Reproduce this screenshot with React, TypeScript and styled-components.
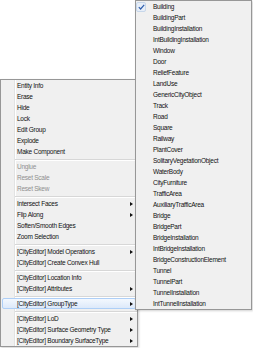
import React from 'react';
import styled, { createGlobalStyle, css } from 'styled-components';

const Global = createGlobalStyle`
  html, body { margin: 0; padding: 0; background: #ffffff; }
  body {
    width: 253px;
    height: 348px;
    overflow: hidden;
    font-family: "Liberation Sans", Arial, sans-serif;
  }
`;

const Stage = styled.div`
  position: relative;
  width: 253px;
  height: 348px;
  background: #ffffff;
  overflow: hidden;
`;

const MenuBase = styled.div`
  position: absolute;
  box-sizing: border-box;
  border: 1px solid #979797;
  display: flex;
  flex-direction: column;
  box-shadow: 1px 1px 2px rgba(0, 0, 0, 0.18);
`;

const ContextMenu = styled(MenuBase)`
  left: 0;
  top: 79px;
  width: 138px;
  padding: 0;
  background:
    linear-gradient(to right, transparent 13px, #e2e3e3 13px, #e2e3e3 14px, #ffffff 14px, #ffffff 15px, transparent 15px),
    #f0f0f0;
`;

const SubMenu = styled(MenuBase)`
  left: 135px;
  top: 0;
  width: 117px;
  padding: 0;
  background: #f0f0f0;
`;

const Row = styled.div<{ $disabled?: boolean; $active?: boolean; $gutter: number }>`
  height: 11px;
  flex: none;
  box-sizing: border-box;
  display: flex;
  align-items: center;
  margin: 0 1px;
  padding-left: ${(p) => p.$gutter}px;
  padding-right: 3px;
  font-size: 6.5px;
  letter-spacing: -0.25px;
  line-height: 11px;
  white-space: nowrap;
  color: ${(p) => (p.$disabled ? '#8f8f8f' : '#111111')};
  ${(p) =>
    p.$active &&
    css`
      border: 1px solid #aecff7;
      border-radius: 2px;
      background: linear-gradient(#f3f8fe, #dde9fa);
      padding-left: ${p.$gutter - 1}px;
      padding-right: 2px;
    `}
`;

const Label = styled.span`
  flex: 1;
`;

const Arrow = styled.span`
  width: 0;
  height: 0;
  border-left: 3px solid #111111;
  border-top: 2.5px solid transparent;
  border-bottom: 2.5px solid transparent;
`;

const Separator = styled.div`
  height: 4px;
  flex: none;
  display: flex;
  align-items: center;
  padding-left: 14px;
  &::after {
    content: '';
    flex: 1;
    height: 1px;
    background: #d7d7d7;
    box-shadow: 0 1px 0 #ffffff;
  }
`;

const CheckRow = styled.div`
  height: 11px;
  flex: none;
  display: flex;
  align-items: center;
  margin: 0 1px 0 0;
  font-size: 6.5px;
  letter-spacing: -0.25px;
  white-space: nowrap;
  color: #111111;
`;

const CheckBox = styled.span`
  width: 10px;
  height: 10px;
  box-sizing: border-box;
  margin-right: 7px;
  border: 1px solid #c7d7ea;
  border-radius: 2px;
  background: #e7eef8;
  display: flex;
  align-items: center;
  justify-content: center;
`;

type Item = { label: string; sub?: boolean; disabled?: boolean; active?: boolean } | 'sep';

const mainItems: Item[] = [
  { label: 'Entity Info' },
  { label: 'Erase' },
  { label: 'Hide' },
  { label: 'Lock' },
  { label: 'Edit Group' },
  { label: 'Explode' },
  { label: 'Make Component' },
  'sep',
  { label: 'Unglue', disabled: true },
  { label: 'Reset Scale', disabled: true },
  { label: 'Reset Skew', disabled: true },
  'sep',
  { label: 'Intersect Faces', sub: true },
  { label: 'Flip Along', sub: true },
  { label: 'Soften/Smooth Edges' },
  { label: 'Zoom Selection' },
  'sep',
  { label: '[CityEditor] Model Operations', sub: true },
  { label: '[CityEditor] Create Convex Hull' },
  'sep',
  { label: '[CityEditor] Location Info' },
  { label: '[CityEditor] Attributes', sub: true },
  'sep',
  { label: '[CityEditor] GroupType', sub: true, active: true },
  'sep',
  { label: '[CityEditor] LoD', sub: true },
  { label: '[CityEditor] Surface Geometry Type', sub: true },
  { label: '[CityEditor] Boundary SurfaceType', sub: true },
];

const subItems = [
  'BuildingPart',
  'BuildingInstallation',
  'IntBuildingInstallation',
  'Window',
  'Door',
  'ReliefFeature',
  'LandUse',
  'GenericCityObject',
  'Track',
  'Road',
  'Square',
  'Railway',
  'PlantCover',
  'SolitaryVegetationObject',
  'WaterBody',
  'CityFurniture',
  'TrafficArea',
  'AuxiliaryTrafficArea',
  'Bridge',
  'BridgePart',
  'BridgeInstallation',
  'IntBridgeInstallation',
  'BridgeConstructionElement',
  'Tunnel',
  'TunnelPart',
  'TunnelInstallation',
  'IntTunnelInstallation',
];

export default function App() {
  return (
    <Stage>
      <Global />
      <ContextMenu>
        {mainItems.map((it, i) =>
          it === 'sep' ? (
            <Separator key={i} />
          ) : (
            <Row key={i} $gutter={15} $disabled={it.disabled} $active={it.active}>
              <Label>{it.label}</Label>
              {it.sub && <Arrow />}
            </Row>
          )
        )}
      </ContextMenu>
      <SubMenu>
        <CheckRow>
          <CheckBox>
            <svg width="7" height="6" viewBox="0 0 7 6">
              <path d="M0.8 3.2 L2.6 5 L6.2 0.8" fill="none" stroke="#2f5fae" strokeWidth="1.2" />
            </svg>
          </CheckBox>
          <Label>Building</Label>
        </CheckRow>
        {subItems.map((s) => (
          <Row key={s} $gutter={16}>
            <Label>{s}</Label>
          </Row>
        ))}
      </SubMenu>
    </Stage>
  );
}
